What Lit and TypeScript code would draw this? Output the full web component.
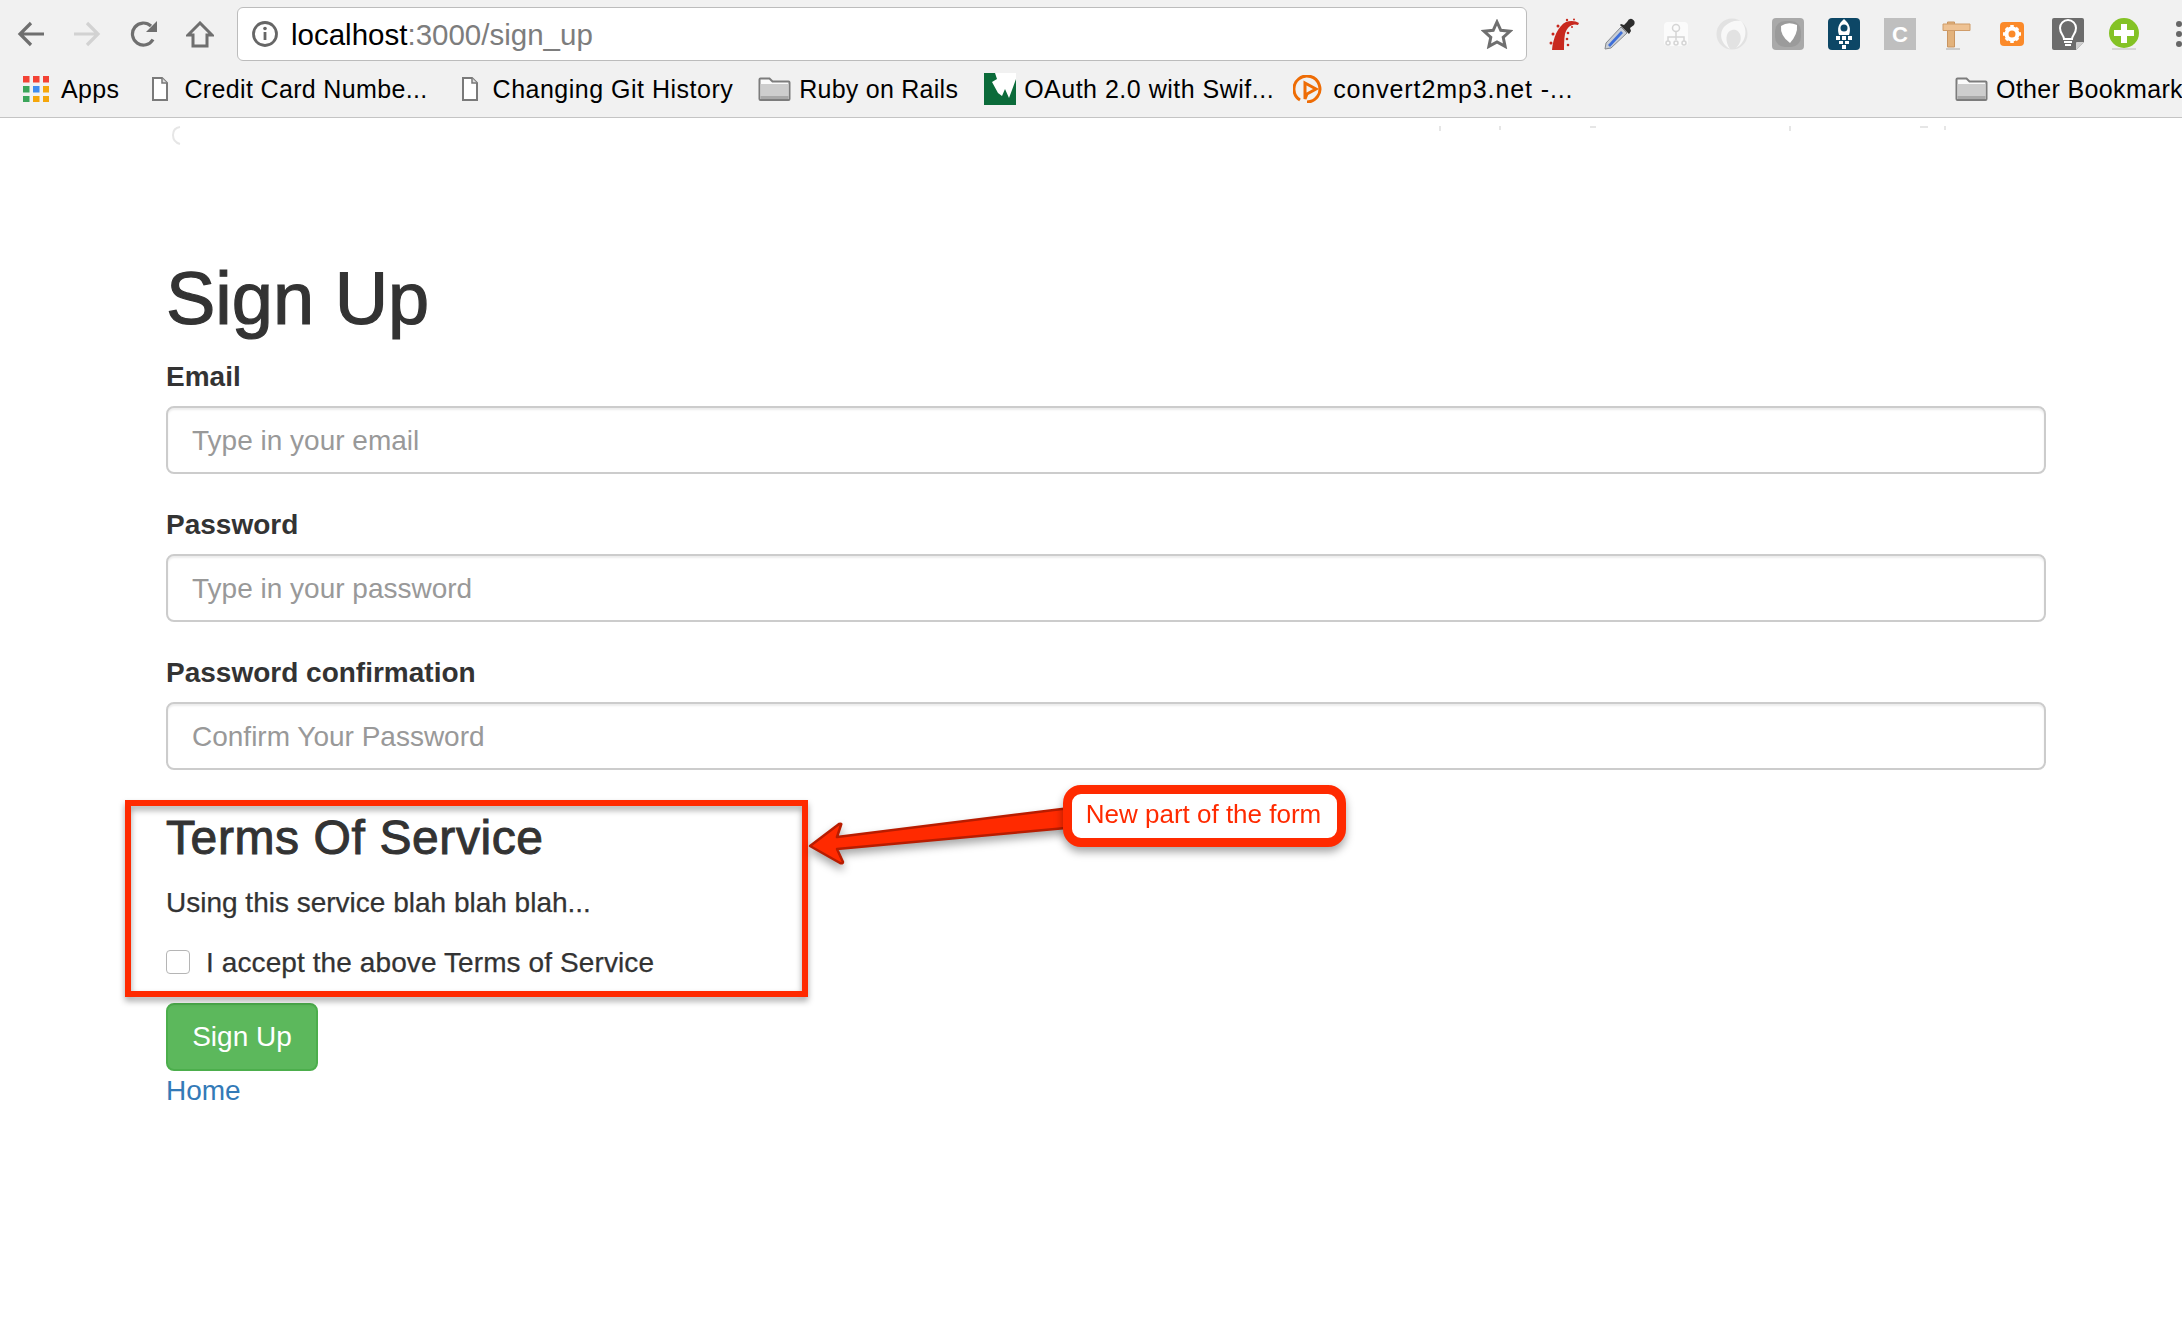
import { LitElement, html, css, svg } from 'lit';
import { customElement } from 'lit/decorators.js';

const folder = html`<svg class="ico" width="33" height="24" viewBox="0 0 33 24"><path d="M1.5 22V2.5q0-1 1-1h9l3 3h16q1 0 1 1V22q0 1-1 1h-28q-1 0-1-1z" fill="#fafafa" stroke="#7c7c7c" stroke-width="2"/><path d="M2.500 7h28v15h-28z" fill="#cdcdcd"/><path d="M2.500 19h28v3h-28z" fill="#a8a8a8"/></svg>`;
const doc = html`<svg class="ico" width="16" height="24" viewBox="0 0 16 24"><path d="M1 1h9l5 5v17H1z" fill="#fff" stroke="#7a7a7a" stroke-width="2"/><path d="M10 1v5h5" fill="#ddd" stroke="#7a7a7a" stroke-width="1.500"/></svg>`;
const apps = html`<svg class="ico" width="26" height="26" viewBox="0 0 26 26">
  ${[
    ['#f34235', '#f34235', '#f34235'],
    ['#3ba55a', '#3f8cf0', '#f5a60b'],
    ['#3ba55a', '#f5a60b', '#f5a60b'],
  ].map((row, r) => row.map((c, i) => svg`<rect x=${i * 10} y=${r * 10} width="6.500" height="6.500" fill=${c}/>`))}
</svg>`;
const wicon = html`<svg class="ico" width="32" height="32" viewBox="0 0 32 32"><path d="M0 0h32v32H0z" fill="#0b6b3a"/><path d="M11 0h21v6l-4 11-3 8-4-9-3 7-4-3-6-11 5-3z" fill="#fff"/></svg>`;
const playIcon = html`<svg class="ico" width="32" height="28" viewBox="0 0 32 28"><path d="M7 25A13 13 0 1 1 14 27" fill="none" stroke="#ee6c05" stroke-width="3"/><path d="M12 8l11 6-9 5-2 5z" fill="none" stroke="#ee6c05" stroke-width="3"/></svg>`;

// spacing = letter-spacing per label, the widths differ a little from the reference font
const bookmarks = [
  { icon: apps, label: 'Apps', gap: 0, iconGap: 12, spacing: 0.35 },
  { icon: doc, label: 'Credit Card Numbe...', gap: 33, iconGap: 16, spacing: 0.35 },
  { icon: doc, label: 'Changing Git History', gap: 34, iconGap: 15, spacing: 0.5 },
  { icon: folder, label: 'Ruby on Rails', gap: 25, iconGap: 8, spacing: 0.25 },
  { icon: wicon, label: 'OAuth 2.0 with Swif...', gap: 26, iconGap: 8, spacing: 0.5 },
  { icon: playIcon, label: 'convert2mp3.net -...', gap: 19, iconGap: 8, spacing: 0.9 },
];

// extension icons, left to right, 56px apart
const extensions = [
  svg`<path d="M4 32C5 20 10 8 18 4c5-2 10-1 13 1l-1 2c-6-2-11 2-13 9-1 6-1 11-1 16z" fill="#c8281e"/><g fill="#c8281e"><circle cx="3" cy="25" r="1.500"/><circle cx="5" cy="16" r="1.500"/><circle cx="10" cy="8" r="1.500"/><circle cx="19" cy="2" r="1.200"/><circle cx="26" cy="1.500" r="1"/><circle cx="20" cy="15" r="1.300"/><circle cx="19" cy="21" r="1.300"/><circle cx="20" cy="27" r="1.300"/><circle cx="24" cy="9" r="1"/></g>`,
  svg`<path d="M1 31l1-6L17 9l6 6L7 30z" fill="#c9ced6" stroke="#85888c"/><path d="M4 27L17 13l2 2L6 29z" fill="#3f6fd8"/><path d="M16 7l9 9 2-3-1-3 4-3q2-4-2-6-3-1-5 3l-3 3-3-1z" fill="#2d2d2d"/>`,
  svg`<rect x="4" y="4" width="24" height="24" rx="4" fill="#fbfbfb"/><g fill="none" stroke="#d5d5d5" stroke-width="1.500"><circle cx="16" cy="10" r="3.500"/><path d="M16 14v5M8 23v-4h16v4M16 19v3"/><circle cx="8" cy="25" r="2"/><circle cx="16" cy="25" r="2"/><circle cx="24" cy="25" r="2"/></g>`,
  svg`<circle cx="16" cy="16" r="15.500" fill="#e2e2e2"/><path d="M25 3C32 10 31 24 20 30 29 22 24 10 16 12 9 14 9 24 14 31 5 26 2 15 9 8 14 3 20 2 25 3z" fill="#f8f8f8"/>`,
  svg`<rect width="32" height="32" rx="4" fill="#a9a9a9"/><rect x="3" y="3" width="26" height="26" rx="10" fill="#8e8e8e" opacity=".500"/><path d="M9 8q7-5 16-1 1 9-7 18Q8 18 9 8z" fill="#fff"/>`,
  svg`<rect width="32" height="32" rx="4" fill="#0d4766"/><path d="M16 1c6 5 7 10 5 16H11C9 11 10 6 16 1z" fill="#fff"/><circle cx="16" cy="10" r="3.500" fill="#0d4766"/><g fill="#fff"><path d="M8 18h4v4H8zM14 18h4v4h-4zM20 18h4v4h-4zM11 23h4v3h-4zM17 23h4v3h-4zM14 27h4v4h-4z"/></g>`,
  svg`<rect width="32" height="32" fill="#bfbfbf"/><text x="16" y="24" text-anchor="middle" font-family="Liberation Sans, sans-serif" font-weight="700" font-size="22" fill="#fff">C</text>`,
  svg`<path d="M7.500 4h7v25h-7z" fill="#e2b27c" stroke="#c99561"/><path d="M3 6h27v6.500H3z" fill="#eec293" stroke="#cf9c69"/><path d="M6 31h14" stroke="#ccc" stroke-width="2"/>`,
  svg`<rect x="4" y="4" width="24" height="24" rx="4" fill="#fb8a2a"/><circle cx="16" cy="16" r="5.500" fill="none" stroke="#fff" stroke-width="4"/><g stroke="#fff" stroke-width="3.500"><path d="M16 7v3M16 22v3M7 16h3M22 16h3M10 10l2 2M20 20l2 2M22 10l-2 2M12 20l-2 2"/></g>`,
  svg`<path d="M2 0h28q2 0 2 2v22l-8 8H2q-2 0-2-2V2q0-2 2-2z" fill="#6c6c6c"/><path d="M32 24l-8 8v-7q0-1 1-1z" fill="#cfcfcf"/><path d="M12 21c0-4-4-5-4-11a8 8 0 0 1 16 0c0 6-4 7-4 11zM12 24h8M13 27h6" fill="none" stroke="#fff" stroke-width="2"/>`,
  svg`<circle cx="16" cy="15" r="15" fill="#84c225"/><path d="M13 6h6v6h7v6h-7v7h-6v-7H6v-6h7z" fill="#fff"/><path d="M4 31h24" stroke="#ccc" stroke-width="1.500"/>`,
];

@customElement('app-root')
export class AppRoot extends LitElement {
  static styles = css`
    :host {
      display: block;
      position: relative;
      min-height: 1338px;
      overflow: hidden;
      background: #fff;
      color: #333;
      font-family: 'Liberation Sans', Arial, sans-serif;
    }

    .chrome {
      height: 117px;
      background: #f1f1f1;
      border-bottom: 1px solid #c4c4c4;
    }
    .toolbar {
      height: 68px;
      display: flex;
      align-items: flex-start;
      padding-left: 3px;
    }
    .slot {
      width: 56px;
      height: 68px;
      flex: none;
      display: flex;
      align-items: center;
      justify-content: center;
    }
    .nudge svg {
      margin-left: 2px;
    }
    .address {
      flex: none;
      box-sizing: border-box;
      width: 1290px;
      height: 54px;
      margin: 7px 9px 0 10px;
      display: flex;
      align-items: center;
      gap: 13px;
      padding: 0 13px 0 14px;
      background: #fff;
      border: 1px solid #bcbcbc;
      border-radius: 6px;
    }
    .url {
      flex: 1;
      padding-top: 2px;
      font-size: 29.500px;
      color: #000;
      white-space: nowrap;
    }
    .url span {
      color: #7d7d7d;
    }
    .dots {
      flex: none;
      display: flex;
      flex-direction: column;
      gap: 4px;
      margin: 21px 0 0 24px;
    }
    .dots i {
      width: 6px;
      height: 6px;
      border-radius: 3px;
      background: #666;
    }
    .slot svg {
      display: block;
    }

    .bookmarks {
      height: 42px;
      display: flex;
      align-items: center;
      padding-left: 23px;
      white-space: nowrap;
      font-size: 25px;
      letter-spacing: 0.35px;
      color: #000;
    }
    .bm {
      flex: none;
      display: flex;
      align-items: center;
    }
    .ico {
      display: block;
      flex: none;
    }
    .other {
      margin-left: auto;
      width: 227px;
      overflow: hidden;
      gap: 8px;
    }

    .content {
      padding: 139px 136px 0 166px;
    }
    h1 {
      margin: 0 0 18px;
      padding-top: 2px;
      font-size: 74px;
      line-height: 79px;
      font-weight: 500;
      -webkit-text-stroke: 1.2px #333;
    }
    .group {
      margin-bottom: 30px;
    }
    label {
      display: block;
      margin-bottom: 8px;
      font-size: 28px;
      line-height: 42px;
      font-weight: 700;
    }
    input.text {
      display: block;
      box-sizing: border-box;
      width: 100%;
      height: 68px;
      padding: 14px 24px 12px;
      font: 28px 'Liberation Sans', Arial, sans-serif;
      color: #555;
      background: #fff;
      border: 2px solid #ccc;
      border-radius: 8px;
      box-shadow: inset 0 2px 2px rgba(0, 0, 0, 0.075);
    }
    input.text::placeholder {
      color: #999;
    }
    h2 {
      margin: 41px 0 19px;
      font-size: 48px;
      line-height: 53px;
      font-weight: 500;
      letter-spacing: 0.6px;
      -webkit-text-stroke: 1px #333;
    }
    p {
      margin: 0 0 20px;
      font-size: 28px;
      line-height: 40px;
      -webkit-text-stroke: 0.25px #333;
    }
    .terms {
      display: flex;
      align-items: center;
      gap: 16px;
      height: 40px;
      margin-bottom: 20px;
      font-size: 28px;
      letter-spacing: 0.1px;
      -webkit-text-stroke: 0.25px #333;
    }
    .terms input {
      appearance: none;
      box-sizing: border-box;
      width: 24px;
      height: 24px;
      margin: -2px 0 0;
      background: #fff;
      border: 1.500px solid #b5b5b5;
      border-radius: 4px;
    }
    .submit {
      display: block;
      box-sizing: border-box;
      width: 152px;
      height: 68px;
      padding: 0;
      font: 28px 'Liberation Sans', Arial, sans-serif;
      color: #fff;
      background: #5cb85c;
      border: 2px solid #4cae4c;
      border-radius: 8px;
    }
    .home {
      display: block;
      font-size: 28px;
      line-height: 40px;
      color: #337ab7;
      text-decoration: none;
    }

    /* annotations lying over the page */
    .mark {
      position: absolute;
      left: 125px;
      top: 800px;
      width: 683px;
      height: 197px;
      box-sizing: border-box;
      border: 6px solid #ff2a00;
      filter: drop-shadow(0 4px 3px rgba(0, 0, 0, 0.35));
    }
    .arrow {
      position: absolute;
      left: 800px;
      top: 795px;
      filter: drop-shadow(0 5px 4px rgba(0, 0, 0, 0.35));
    }
    .callout {
      position: absolute;
      left: 1063px;
      top: 785px;
      width: 283px;
      height: 62px;
      box-sizing: border-box;
      display: flex;
      align-items: center;
      justify-content: center;
      padding: 0 2px 3px 0;
      background: #fff;
      border: 9px solid #ff2a00;
      border-radius: 18px;
      font-size: 26px;
      color: #ff2a00;
      white-space: nowrap;
      filter: drop-shadow(0 5px 4px rgba(0, 0, 0, 0.35));
    }
    .smudges {
      position: absolute;
      left: 0;
      top: 118px;
    }
  `;

  render() {
    return html`
      <div class="chrome">
        <div class="toolbar">
          <div class="slot">
            <svg width="28" height="26" viewBox="0 0 28 26" fill="none" stroke="#6f6f6f" stroke-width="3.200"><path d="M27 13H3M14 2L3 13l11 11"/></svg>
          </div>
          <div class="slot">
            <svg width="28" height="26" viewBox="0 0 28 26" fill="none" stroke="#d2d2d2" stroke-width="3.200"><path d="M1 13h24M14 2l11 11-11 11"/></svg>
          </div>
          <div class="slot nudge">
            <svg width="28" height="26" viewBox="0 0 28 26" fill="none"><path d="M23 18.500A11 11 0 1 1 21 5" stroke="#6f6f6f" stroke-width="3.200"/><path d="M27 0v11H16z" fill="#6f6f6f"/></svg>
          </div>
          <div class="slot nudge">
            <svg width="28" height="27" viewBox="0 0 28 27" fill="none" stroke="#6f6f6f" stroke-width="3"><path d="M14 2L2 14h5v11h14V14h5z"/></svg>
          </div>
          <div class="address">
            <svg width="26" height="26" viewBox="0 0 26 26" fill="none"><circle cx="13" cy="13" r="11.500" stroke="#666" stroke-width="2.800"/><path d="M13 11v8" stroke="#666" stroke-width="2.800"/><circle cx="13" cy="7.500" r="1.800" fill="#666"/></svg>
            <div class="url">localhost<span>:3000/sign_up</span></div>
            <svg width="32" height="30" viewBox="0 0 32 30" fill="none" stroke="#6f6f6f" stroke-width="3"><path d="M16 3l3.800 8.300 9.200 1-6.800 6.100 1.900 9L16 22.900 7.900 27.400l1.900-9L3 12.300l9.200-1z"/></svg>
          </div>
          ${extensions.map(
            (e) => html`<div class="slot"><svg width="32" height="32" viewBox="0 0 32 32">${e}</svg></div>`,
          )}
          <div class="dots"><i></i><i></i><i></i></div>
        </div>
        <div class="bookmarks">
          ${bookmarks.map(
            (b) => html`
              <div class="bm" style="margin-left:${b.gap}px;gap:${b.iconGap}px;letter-spacing:${b.spacing}px">${b.icon}<span>${b.label}</span></div>
            `,
          )}
          <div class="bm other">${folder}<span>Other Bookmarks</span></div>
        </div>
      </div>

      <form class="content">
        <h1>Sign Up</h1>
        <div class="group">
          <label>Email</label>
          <input class="text" type="text" placeholder="Type in your email" />
        </div>
        <div class="group">
          <label>Password</label>
          <input class="text" type="password" placeholder="Type in your password" />
        </div>
        <div class="group">
          <label>Password confirmation</label>
          <input class="text" type="password" placeholder="Confirm Your Password" />
        </div>
        <h2>Terms Of Service</h2>
        <p>Using this service blah blah blah...</p>
        <div class="terms">
          <input type="checkbox" />
          <span>I accept the above Terms of Service</span>
        </div>
        <button class="submit" type="button">Sign Up</button>
        <a class="home" href="#">Home</a>
      </form>

      <svg class="smudges" width="2182" height="40" viewBox="0 0 2182 40" fill="none" stroke="#e6e6e6" stroke-width="2">
        <path d="M180 9q-7 1-7 8t7 9"/>
        <path d="M1440 8v5M1500 8v4M1590 9h6M1790 8v5M1920 9h8M1945 8v4"/>
      </svg>
      <div class="mark"></div>
      <svg class="arrow" width="280" height="80" viewBox="800 795 280 80">
        <path
          d="M1066 808.500q6 0 6 9t-6 10.500L837 849l6 13q0 2-3 1l-30-17 29-22q3-1 2 1l-4 12z"
          fill="#ff2a00"
          stroke="#b81c00"
          stroke-width="2.500"
          stroke-linejoin="round"
        />
      </svg>
      <div class="callout">New part of the form</div>
    `;
  }
}
